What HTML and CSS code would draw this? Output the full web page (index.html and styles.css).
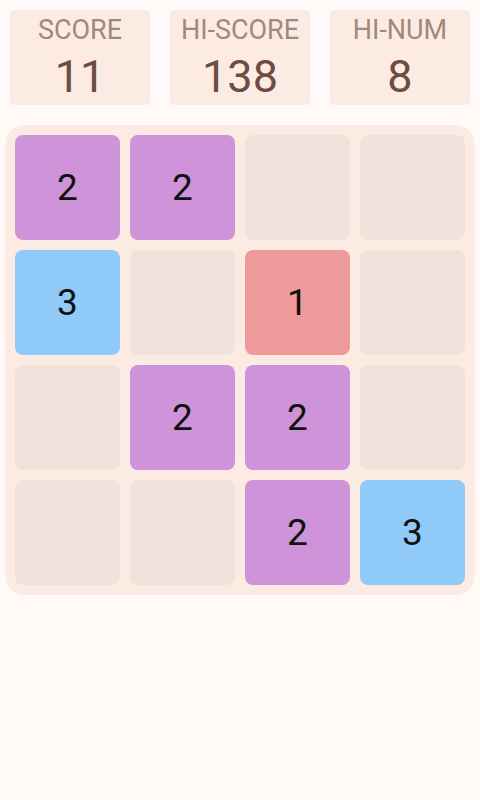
FILE: index.html
```html
<!DOCTYPE html>
<html>
<head>
    <meta charset="UTF-8">
    <title>Tiles</title>
    <link rel="stylesheet" href="styles.css">
</head>
<body>
    <header class="scores">
        <div class="score-box">
            <div class="score-label">SCORE</div>
            <div class="score-value">11</div>
        </div>
        <div class="score-box">
            <div class="score-label">HI-SCORE</div>
            <div class="score-value">138</div>
        </div>
        <div class="score-box">
            <div class="score-label">HI-NUM</div>
            <div class="score-value">8</div>
        </div>
    </header>
    <main class="board">
        <div class="tile tile-2">2</div>
        <div class="tile tile-2">2</div>
        <div class="tile"></div>
        <div class="tile"></div>

        <div class="tile tile-3">3</div>
        <div class="tile"></div>
        <div class="tile tile-1">1</div>
        <div class="tile"></div>

        <div class="tile"></div>
        <div class="tile tile-2">2</div>
        <div class="tile tile-2">2</div>
        <div class="tile"></div>

        <div class="tile"></div>
        <div class="tile"></div>
        <div class="tile tile-2">2</div>
        <div class="tile tile-3">3</div>
    </main>
</body>
</html>
```

FILE: styles.css
```css
body {
    margin: 0;
    background: #fffaf7;
    font-family: 'Roboto', sans-serif;
}

.scores {
    display: flex;
    gap: 20px;
    padding: 10px 10px 0;
}

.score-box {
    width: 140px;
    height: 95px;
    background: #fcebe2;
    border-radius: 4px;
    text-align: center;
}

.score-label {
    margin-top: 4px;
    font-size: 27px;
    line-height: 32px;
    color: #a1887f;
}

.score-value {
    margin-top: 7px;
    font-size: 45px;
    line-height: 48px;
    color: #6d4c41;
}

.board {
    display: grid;
    grid-template-columns: repeat(4, 105px);
    grid-auto-rows: 105px;
    gap: 10px;
    margin: 20px 5px 0;
    padding: 10px;
    background: #fcebe2;
    border-radius: 20px;
}

.tile {
    display: flex;
    align-items: center;
    justify-content: center;
    border-radius: 8px;
    background: #f2e2dc;
    font-size: 37px;
    color: #111;
}

.tile-1 {
    background: #ef9a9a;
}

.tile-2 {
    background: #ce93d8;
}

.tile-3 {
    background: #90caf9;
}
```
